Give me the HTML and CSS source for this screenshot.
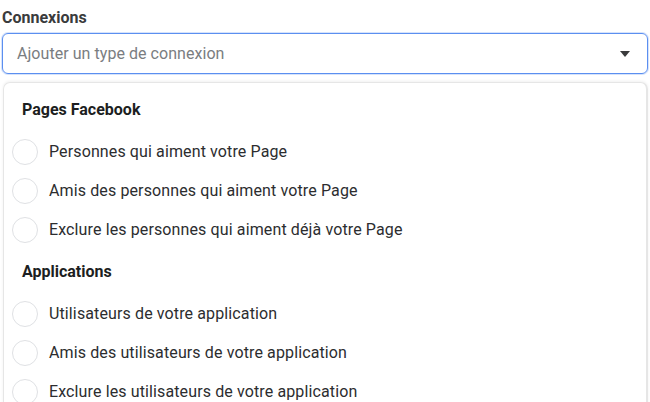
FILE: index.html
```html
<!DOCTYPE html>
<html lang="fr">
<head>
    <meta charset="utf-8">
    <title>Connexions</title>
    <link rel="stylesheet" href="styles.css">
</head>
<body>
<div class="field">
    <div class="field-label">Connexions</div>
    <div class="select">
        <span class="placeholder">Ajouter un type de connexion</span>
        <span class="caret"></span>
    </div>
    <div class="menu">
        <div class="group-title">Pages Facebook</div>
        <div class="option"><span class="radio"></span>Personnes qui aiment votre Page</div>
        <div class="option"><span class="radio"></span>Amis des personnes qui aiment votre Page</div>
        <div class="option"><span class="radio"></span>Exclure les personnes qui aiment déjà votre Page</div>
        <div class="group-title">Applications</div>
        <div class="option"><span class="radio"></span>Utilisateurs de votre application</div>
        <div class="option"><span class="radio"></span>Amis des utilisateurs de votre application</div>
        <div class="option"><span class="radio"></span>Exclure les utilisateurs de votre application</div>
    </div>
</div>
</body>
</html>
```

FILE: styles.css
```css
body {
    margin: 0;
    background: #fff;
    font-family: Roboto, "Liberation Sans", sans-serif;
    color: #1c1e21;
    overflow: hidden;
}
.field {
    padding: 7px 2px 0 2px;
}
.field-label {
    font-size: 16px;
    font-weight: bold;
    color: #3a3b3c;
    line-height: 22px;
    height: 26px;
}
.select {
    display: flex;
    align-items: center;
    justify-content: space-between;
    height: 39px;
    border: 1px solid #5b8ff0;
    border-radius: 6px;
    padding: 0 17px 0 14px;
    box-shadow: 0 0 0 1px rgba(91, 143, 240, 0.25);
}
.placeholder {
    font-size: 16px;
    color: #7a7d81;
    letter-spacing: 0.05px;
}
.caret {
    width: 0;
    height: 0;
    border-left: 5px solid transparent;
    border-right: 5px solid transparent;
    border-top: 6px solid #3a3b3c;
}
.menu {
    margin: 8px 0 0 1px;
    border: 1px solid #e6e6e6;
    border-right-width: 2px;
    border-bottom: none;
    border-radius: 7px 7px 0 0;
    padding: 4px 0 0 0;
    box-shadow: 0 -1px 3px rgba(0, 0, 0, 0.06);
}
.group-title {
    font-size: 16px;
    font-weight: bold;
    color: #1c1e21;
    padding-left: 18px;
    height: 45px;
    line-height: 45px;
}
.option {
    display: flex;
    align-items: center;
    height: 39px;
    font-size: 16px;
    color: #2c2d2f;
    letter-spacing: 0.12px;
    padding-left: 8px;
}
.radio {
    width: 24px;
    height: 24px;
    border: 1.5px solid #dfe1e4;
    border-radius: 50%;
    margin-right: 11px;
    flex: none;
}
```
